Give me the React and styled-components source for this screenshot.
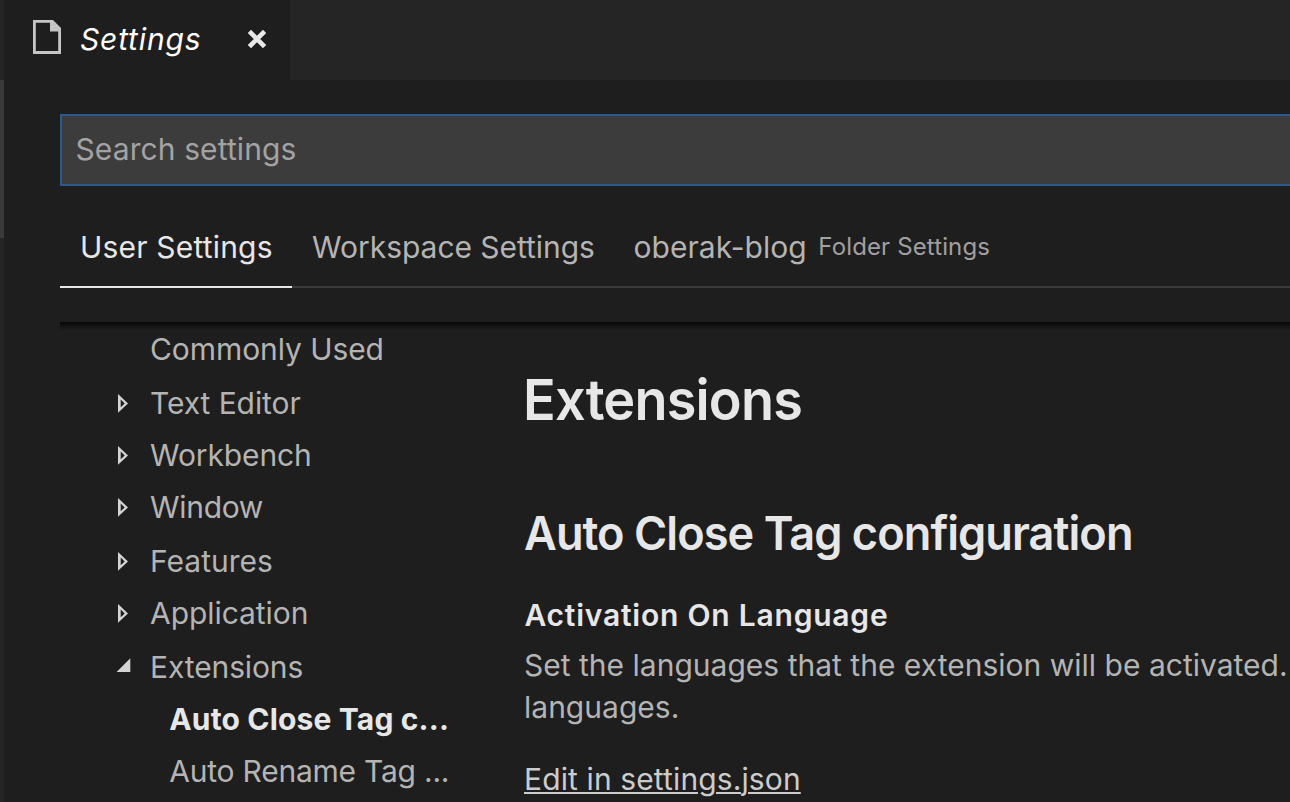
import React from "react";
import styled, { createGlobalStyle } from "styled-components";

const GlobalStyle = createGlobalStyle`
  *, *::before, *::after { box-sizing: border-box; }
  body {
    margin: 0;
    background: #1e1e1e;
    font-family: Inter, "Liberation Sans", sans-serif;
    overflow: hidden;
  }
`;

const Window = styled.div`
  display: flex;
  width: 1290px;
  height: 802px;
  overflow: hidden;
  background: #1e1e1e;
  color: #bbbbbb;
  font-size: 30px;
  white-space: nowrap;
`;

const SidebarEdge = styled.aside`
  flex: 0 0 4px;
  padding-top: 80px;
  background: #252526;
`;

const SidebarThumb = styled.div`
  height: 158px;
  background: #39393b;
`;

const Editor = styled.main`
  flex: 1;
  min-width: 0;
  display: flex;
  flex-direction: column;
`;

const TabBar = styled.header`
  flex: 0 0 80px;
  display: flex;
  background: #252526;
`;

const FileTab = styled.div`
  display: flex;
  align-items: center;
  width: 286px;
  padding: 0 0 2px 29px;
  background: #1e1e1e;
`;

const FileTabTitle = styled.span`
  width: 167px;
  margin-left: 19px;
  padding-bottom: 1px;
  line-height: 40px;
  font-style: italic;
  letter-spacing: 0.84px;
  color: #ffffff;
`;

const Icon = styled.svg`
  display: block;
  flex: none;
`;

const Body = styled.div`
  flex: 1;
  min-height: 0;
  display: flex;
  flex-direction: column;
  padding: 34px 0 0 56px;
`;

const SearchBox = styled.div`
  flex: 0 0 72px;
  padding-left: 13.5px;
  border: 2px solid #2b5b8e;
  border-right: 0;
  background: #3c3c3c;
  color: #a3a3a3;
  line-height: 66px;
  letter-spacing: 0.1px;
`;

const ScopeBar = styled.nav`
  flex: 0 0 82px;
  display: flex;
  height: 82px;
  margin-top: 20px;
  box-shadow: inset 0 -2px #3b3b3b;
`;

const Scope = styled.div`
  display: flex;
  align-items: center;
  padding: 0 18.6px 0 20.1px;
  line-height: 82px;
  letter-spacing: ${(p) => p.$spacing}px;
  color: ${(p) => (p.$active ? "#e7e7e7" : "#b4b4b4")};
  box-shadow: ${(p) => (p.$active ? "inset 0 -2px #e7e7e7" : "none")};
  width: ${(p) => (p.$width ? p.$width + "px" : "auto")};
`;

const ScopeNote = styled.small`
  margin-left: 11.6px;
  font-size: 24px;
  letter-spacing: 0.13px;
  color: #a0a0a0;
`;

const Panels = styled.section`
  flex: 1;
  min-height: 0;
  display: flex;
  margin-top: 34px;
  background: linear-gradient(#070707, #1e1e1e) no-repeat 0 0 / 100% 8px;
`;

const Tree = styled.ul`
  flex: 0 0 464px;
  margin: 0;
  padding: 1px 0 0 54px;
  list-style: none;
`;

const TreeRow = styled.li`
  display: flex;
  height: ${(p) => p.$height}px;
  line-height: 52px;
  padding-left: ${(p) => (p.$child ? 19.3 : 0)}px;
  font-weight: ${(p) => (p.$selected ? 700 : 400)};
  color: ${(p) => (p.$selected ? "#e7e7e7" : "#b4b4b4")};
  letter-spacing: ${(p) => p.$spacing}px;
`;

const Twistie = styled.span`
  flex: 0 0 36px;
  padding-top: 17px;
`;

const Detail = styled.article`
  flex: 1;
  min-width: 0;
`;

const Title = styled.h1`
  margin: 43px 0 0 -1px;
  font-size: 56px;
  font-weight: 600;
  line-height: 70px;
  letter-spacing: -0.87px;
  color: #e7e7e7;
  transform: scaleX(0.965);
  transform-origin: left;
`;

const GroupTitle = styled.h2`
  margin: 67px 0 0;
  font-size: 47px;
  font-weight: 600;
  line-height: 62px;
  letter-spacing: -0.99px;
  color: #e7e7e7;
  transform: scaleX(0.96);
  transform-origin: left;
`;

const SettingName = styled.h3`
  margin: 30px 0 0 0.4px;
  font-size: 30px;
  font-weight: 600;
  line-height: 42px;
  letter-spacing: 0.78px;
  color: #e7e7e7;
`;

const Description = styled.p`
  margin: 8px 0 0;
  line-height: 42px;
  letter-spacing: 0.01px;
  color: #b4b4b4;
`;

const EditLink = styled.a`
  display: inline-block;
  margin-top: 30px;
  line-height: 42px;
  letter-spacing: 0.12px;
  color: #cccccc;
  text-decoration: underline;
  text-decoration-thickness: 2px;
  text-underline-offset: 2px;
`;

const FileGlyph = styled(Icon)`
  margin-bottom: 4px;
`;

const FileIcon = () => (
  <FileGlyph width="28" height="34" viewBox="0 0 28 34">
    <path
      fill="#c5c5c5"
      fillRule="evenodd"
      d="M0 0h20l8 8v26H0zM2.8 2.8v28.2h22.4V11.6H17V2.8z"
    />
  </FileGlyph>
);

const CloseIcon = () => (
  <Icon width="20" height="20" viewBox="0 0 20 20">
    <path d="M2.4 2.4l15.2 15.2M17.6 2.4L2.4 17.6" stroke="#e8e8e8" strokeWidth="4.7" />
  </Icon>
);

const CollapsedIcon = () => (
  <Icon width="20" height="20" viewBox="0 0 20 20">
    <path
      fill="#d4d4d4"
      fillRule="evenodd"
      d="M4 0v18.8L14 9.4zM6.7 5.5v7.8L10.7 9.4z"
    />
  </Icon>
);

const ExpandedIcon = () => (
  <Icon width="20" height="20" viewBox="0 0 20 20">
    <path fill="#d4d4d4" d="M16.3 .3V14H2.6z" />
  </Icon>
);

const rows = [
  { label: "Commonly Used", height: 54, spacing: -0.08 },
  { label: "Text Editor", height: 52, spacing: -0.08, state: "collapsed" },
  { label: "Workbench", height: 52, spacing: -0.12, state: "collapsed" },
  { label: "Window", height: 54, spacing: -0.3, state: "collapsed" },
  { label: "Features", height: 52, spacing: 0, state: "collapsed" },
  { label: "Application", height: 54, spacing: -0.06, state: "collapsed" },
  { label: "Extensions", height: 52, spacing: -0.12, state: "expanded" },
  { label: "Auto Close Tag c...", height: 52, spacing: 0.16, child: true, selected: true },
  { label: "Auto Rename Tag ...", height: 52, spacing: -0.23, child: true },
];

export default function App() {
  return (
    <>
      <GlobalStyle />
      <Window>
        <SidebarEdge>
          <SidebarThumb />
        </SidebarEdge>
        <Editor>
          <TabBar>
            <FileTab>
              <FileIcon />
              <FileTabTitle>Settings</FileTabTitle>
              <CloseIcon />
            </FileTab>
          </TabBar>
          <Body>
            <SearchBox>Search settings</SearchBox>
            <ScopeBar>
              <Scope $active $width={232} $spacing={0.18}>User Settings</Scope>
              <Scope $spacing={-0.04}>Workspace Settings</Scope>
              <Scope $spacing={0.02}>
                oberak-blog<ScopeNote>Folder Settings</ScopeNote>
              </Scope>
            </ScopeBar>
            <Panels>
              <Tree>
                {rows.map((row) => (
                  <TreeRow
                    key={row.label}
                    $height={row.height}
                    $spacing={row.spacing}
                    $child={row.child}
                    $selected={row.selected}
                  >
                    <Twistie>
                      {row.state === "collapsed" && <CollapsedIcon />}
                      {row.state === "expanded" && <ExpandedIcon />}
                    </Twistie>
                    {row.label}
                  </TreeRow>
                ))}
              </Tree>
              <Detail>
                <Title>Extensions</Title>
                <GroupTitle>Auto Close Tag configuration</GroupTitle>
                <SettingName>Activation On Language</SettingName>
                <Description>
                  Set the languages that the extension will be activated.
                  <br />
                  languages.
                </Description>
                <EditLink>Edit in settings.json</EditLink>
              </Detail>
            </Panels>
          </Body>
        </Editor>
      </Window>
    </>
  );
}
